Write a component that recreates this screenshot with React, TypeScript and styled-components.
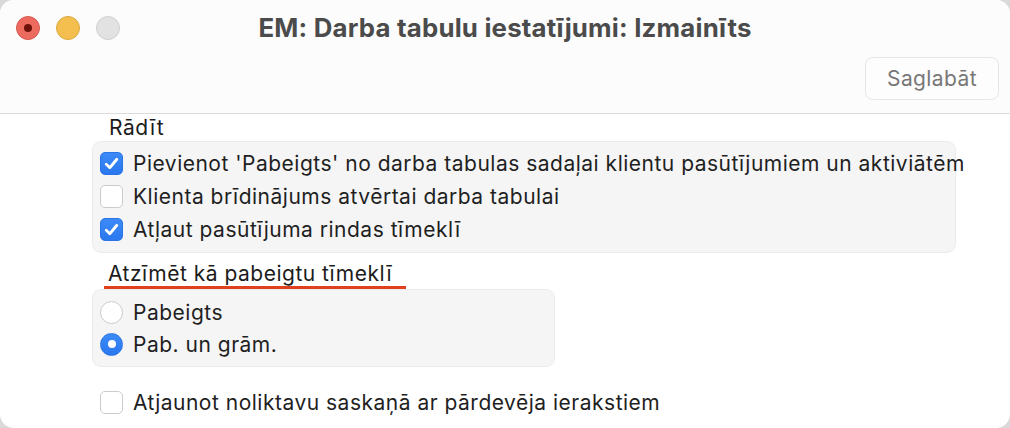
import React from "react";
import styled, { createGlobalStyle } from "styled-components";

const Global = createGlobalStyle`
  html, body { margin: 0; padding: 0; background: #d9d9d9; }
  body { font-family: Inter, "Noto Sans", sans-serif; -webkit-font-smoothing: antialiased; }
  * { box-sizing: border-box; }
`;

const Window = styled.div`
  width: 1010px;
  height: 428px;
  background: #ffffff;
  border-radius: 14px;
  overflow: hidden;
  display: flex;
  flex-direction: column;
`;

const Header = styled.div`
  height: 114px;
  background: #fcfcfc;
  border-bottom: 1px solid #dcdcdc;
  display: flex;
  flex-direction: column;
`;

const TitleBar = styled.div`
  height: 57px;
  display: flex;
  align-items: center;
  padding: 0 0 0 16px;
  position: relative;
`;

const Lights = styled.div`
  display: flex;
  gap: 16px;
  margin-top: -1px;
`;

const Light = styled.div<{ $c: string; $b: string }>`
  width: 24px;
  height: 24px;
  border-radius: 50%;
  background: ${(p) => p.$c};
  border: 1px solid ${(p) => p.$b};
  display: flex;
  align-items: center;
  justify-content: center;
`;

const Dot = styled.div`
  width: 8px;
  height: 8px;
  border-radius: 50%;
  background: #6e120c;
`;

const Title = styled.div`
  position: absolute;
  left: 0;
  right: 0;
  top: 12px;
  line-height: 32px;
  text-align: center;
  font-size: 25.8px;
  font-weight: 700;
  color: #4b4b4b;
  letter-spacing: 0.2px;
`;

const Toolbar = styled.div`
  flex: 1;
  display: flex;
  justify-content: flex-end;
  align-items: flex-start;
  padding-right: 11px;
`;

const SaveButton = styled.button`
  height: 43px;
  width: 134px;
  border: 1px solid #e6e6e6;
  border-radius: 8px;
  background: #fdfdfd;
  color: #777777;
  font-family: inherit;
  font-size: 21px;
  letter-spacing: 0.4px;
  padding: 0;
`;

const Content = styled.div`
  padding-left: 92px;
  display: flex;
  flex-direction: column;
  align-items: flex-start;
`;

const SectionLabel = styled.div`
  font-size: 21px;
  letter-spacing: 0.5px;
  color: #1c1c1c;
  line-height: 24px;
  margin: 2px 0 1px 17px;
`;

const MarkedLabel = styled.div`
  font-size: 21px;
  letter-spacing: 0.5px;
  color: #1c1c1c;
  line-height: 24px;
  margin: 9px 0 0 12px;
  padding: 0 14px 0 4px;
  border-bottom: 3px solid #e1401e;
`;

const Group = styled.div<{ $w: number }>`
  width: ${(p) => p.$w}px;
  background: #f5f5f5;
  border: 1px solid #ebebeb;
  border-radius: 9px;
  padding: 5px 0 6px 7px;
  display: flex;
  flex-direction: column;
`;

const Row = styled.div<{ $h: number }>`
  height: ${(p) => p.$h}px;
  display: flex;
  align-items: center;
  gap: 10px;
  white-space: nowrap;
  font-size: 21px;
  letter-spacing: 0.5px;
  color: #1f1f1f;
`;

const Box = styled.div<{ $on?: boolean }>`
  width: 23px;
  height: 23px;
  flex: none;
  border-radius: 5px;
  background: ${(p) => (p.$on ? "linear-gradient(#3d8bf8, #2a77ef)" : "#ffffff")};
  border: 1px solid ${(p) => (p.$on ? "#2a74e6" : "#cbcbcb")};
  display: flex;
  align-items: center;
  justify-content: center;
`;

const Radio = styled.div<{ $on?: boolean }>`
  width: 23px;
  height: 23px;
  flex: none;
  border-radius: 50%;
  background: ${(p) => (p.$on ? "linear-gradient(#3d8bf8, #2a77ef)" : "#ffffff")};
  border: 1px solid ${(p) => (p.$on ? "#2a74e6" : "#cbcbcb")};
  display: flex;
  align-items: center;
  justify-content: center;
`;

const RadioDot = styled.div`
  width: 8px;
  height: 8px;
  border-radius: 50%;
  background: #ffffff;
`;

const LoneRow = styled(Row)`
  margin: 19px 0 0 8px;
`;

const Check = () => (
  <svg width="17" height="17" viewBox="0 0 16 16">
    <path d="M3 8.6 L6.4 12 L13 4" fill="none" stroke="#fff" strokeWidth="2.6" strokeLinecap="round" strokeLinejoin="round" />
  </svg>
);

const CheckRow = ({ on, children }: { on?: boolean; children: React.ReactNode }) => (
  <Row $h={33}>
    <Box $on={on}>{on && <Check />}</Box>
    <span>{children}</span>
  </Row>
);

const RadioRow = ({ on, children }: { on?: boolean; children: React.ReactNode }) => (
  <Row $h={32}>
    <Radio $on={on}>{on && <RadioDot />}</Radio>
    <span>{children}</span>
  </Row>
);

const RadioGroup = styled(Group)`
  padding-top: 6px;
  padding-bottom: 6px;
`;

export default function App() {
  return (
    <>
      <Global />
      <Window>
        <Header>
          <TitleBar>
            <Lights>
              <Light $c="#ed6a5e" $b="#d55a4f">
                <Dot />
              </Light>
              <Light $c="#f5bf4f" $b="#dca93f" />
              <Light $c="#e2e2e2" $b="#d0d0d0" />
            </Lights>
            <Title>EM: Darba tabulu iestatījumi: Izmainīts</Title>
          </TitleBar>
          <Toolbar>
            <SaveButton>Saglabāt</SaveButton>
          </Toolbar>
        </Header>
        <Content>
          <SectionLabel>Rādīt</SectionLabel>
          <Group $w={864}>
            <CheckRow on>Pievienot 'Pabeigts' no darba tabulas sadaļai klientu pasūtījumiem un aktiviātēm</CheckRow>
            <CheckRow>Klienta brīdinājums atvērtai darba tabulai</CheckRow>
            <CheckRow on>Atļaut pasūtījuma rindas tīmeklī</CheckRow>
          </Group>
          <MarkedLabel>Atzīmēt kā pabeigtu tīmeklī</MarkedLabel>
          <RadioGroup $w={463}>
            <RadioRow>Pabeigts</RadioRow>
            <RadioRow on>Pab. un grām.</RadioRow>
          </RadioGroup>
          <LoneRow $h={33}>
            <Box />
            <span>Atjaunot noliktavu saskaņā ar pārdevēja ierakstiem</span>
          </LoneRow>
        </Content>
      </Window>
    </>
  );
}
